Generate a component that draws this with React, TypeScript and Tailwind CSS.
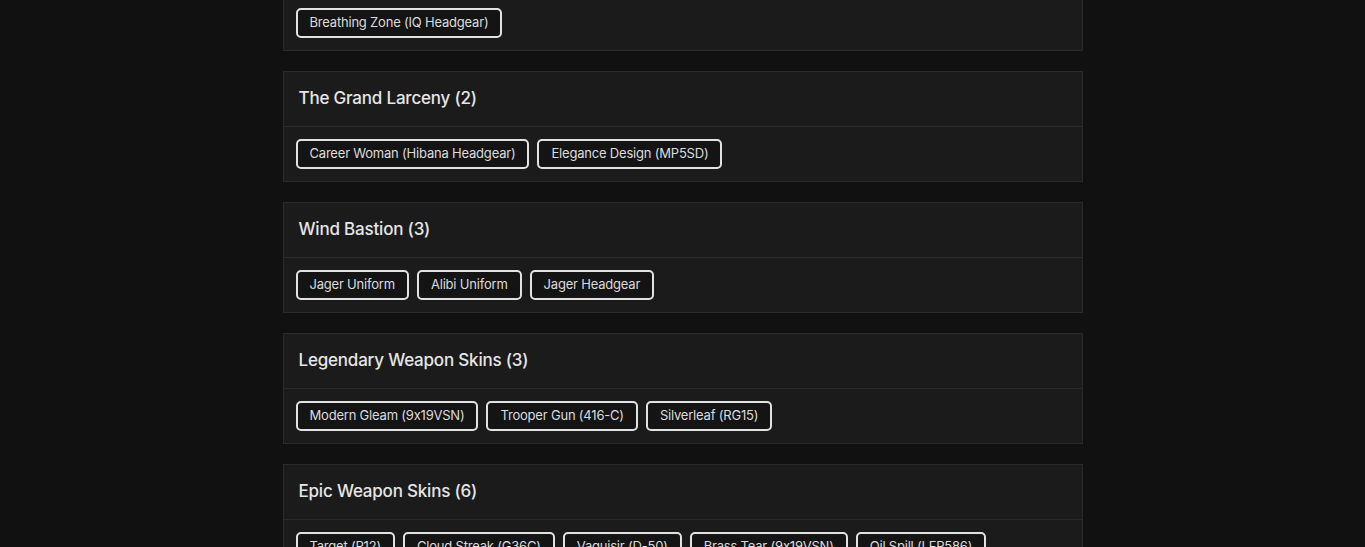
const groups: { title: string; items: string[] }[] = [
  { title: "Elite Headgear (1)", items: ["Breathing Zone (IQ Headgear)"] },
  { title: "The Grand Larceny (2)", items: ["Career Woman (Hibana Headgear)", "Elegance Design (MP5SD)"] },
  { title: "Wind Bastion (3)", items: ["Jager Uniform", "Alibi Uniform", "Jager Headgear"] },
  { title: "Legendary Weapon Skins (3)", items: ["Modern Gleam (9x19VSN)", "Trooper Gun (416-C)", "Silverleaf (RG15)"] },
  {
    title: "Epic Weapon Skins (6)",
    items: ["Target (P12)", "Cloud Streak (G36C)", "Vaquisir (D-50)", "Brass Tear (9x19VSN)", "Oil Spill (LFP586)", "Cobalt (SPAS-12)"],
  },
];

function GroupCard({ title, items }: { title: string; items: string[] }) {
  return (
    <div className="bg-[#1b1b1b] border border-[#2b2b2b]">
      <div className="h-[55px] px-[15px] flex items-center border-b border-[#2b2b2b]">
        <h3 className="text-[17px] font-medium tracking-[-0.2px] text-[#e6e6e6]">{title}</h3>
      </div>
      <div className="px-3 py-3 flex flex-wrap gap-2">
        {items.map((item) => (
          <button
            key={item}
            className="h-[30px] px-3 border-2 border-[#e2e2e2] rounded-[5px] bg-[#141414] text-[13px] tracking-[-0.2px] text-[#dcdcdc]"
          >
            {item}
          </button>
        ))}
      </div>
    </div>
  );
}

export default function App() {
  return (
    <div
      className="min-h-screen bg-[#111111] overflow-hidden [font-feature-settings:'calt'_0]"
      style={{ fontFamily: "Inter, 'Noto Sans', sans-serif" }}
    >
      <div className="w-[800px] mx-auto -mt-[60px] space-y-5">
        {groups.map((g) => (
          <GroupCard key={g.title} title={g.title} items={g.items} />
        ))}
      </div>
    </div>
  );
}
